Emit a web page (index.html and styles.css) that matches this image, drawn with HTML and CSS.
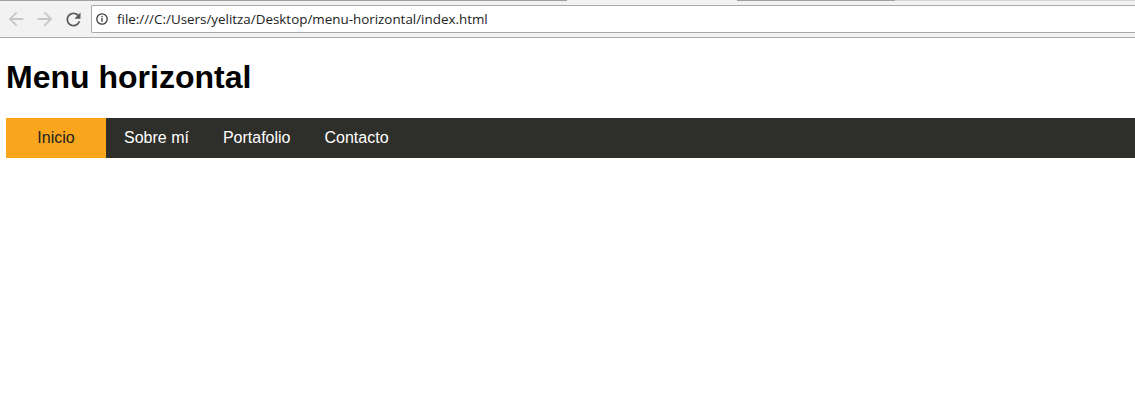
FILE: index.html
```html
<!DOCTYPE html>
<html lang="es">
<head>
<meta charset="utf-8">
<title>Menu horizontal</title>
<link rel="stylesheet" href="styles.css">
</head>
<body>
<div class="chrome">
  <div class="tabstrip">
    <span class="tab-edge e1"></span>
    <span class="tab-gap"></span>
    <span class="tab-edge e2"></span>
    <span class="tab-rest"></span>
  </div>
  <div class="toolbar">
    <div class="navbtns">
      <span class="btn back">
        <svg viewBox="0 0 24 24" width="22" height="22"><path d="M20 11H7.83l5.59-5.59L12 4l-8 8 8 8 1.41-1.41L7.83 13H20v-2z" fill="#c6c6c6"/></svg>
      </span>
      <span class="btn fwd">
        <svg viewBox="0 0 24 24" width="22" height="22"><path d="M4 11h12.17l-5.59-5.59L12 4l8 8-8 8-1.41-1.41L16.17 13H4v-2z" fill="#c6c6c6"/></svg>
      </span>
      <span class="btn reload">
        <svg viewBox="0 0 24 24" width="21" height="21"><path d="M17.65 6.35C16.2 4.9 14.21 4 12 4c-4.42 0-7.99 3.58-7.99 8s3.57 8 7.99 8c3.73 0 6.84-2.55 7.73-6h-2.08c-.82 2.33-3.04 4-5.65 4-3.31 0-6-2.69-6-6s2.69-6 6-6c1.66 0 3.14.69 4.22 1.78L13 11h7V4l-2.35 2.35z" fill="#5a5a5a"/></svg>
      </span>
    </div>
    <div class="omnibox">
      <svg class="info" viewBox="0 0 12 12" width="12" height="12"><circle cx="6" cy="6" r="5.2" fill="none" stroke="#3c3c3c" stroke-width="1.3"/><rect x="5.35" y="5" width="1.3" height="3.8" fill="#3c3c3c"/><rect x="5.35" y="2.9" width="1.3" height="1.3" fill="#3c3c3c"/></svg>
      <span class="url">file:///C:/Users/yelitza/Desktop/menu-horizontal/index.html</span>
    </div>
  </div>
</div>
<main class="page">
  <h1 class="title">Menu horizontal</h1>
  <nav class="menu">
    <a class="item active" href="#">Inicio</a>
    <a class="item" href="#">Sobre mí</a>
    <a class="item" href="#">Portafolio</a>
    <a class="item" href="#">Contacto</a>
  </nav>
</main>
</body>
</html>
```
FILE: styles.css
```css
* { box-sizing: border-box; }
html, body { margin: 0; padding: 0; background: #fff; }
body { width: 1135px; overflow: hidden; }

.chrome {
  height: 38px;
  background: #f2f2f2;
  border-bottom: 1px solid #aaaaaa;
}
.tabstrip {
  display: flex;
  height: 1px;
}
.tab-edge { background: #a0a0a0; height: 1px; }
.e1 { width: 567px; }
.tab-gap { width: 170px; }
.e2 { width: 158px; }
.tab-rest { flex: 1; background: #d6d6d6; }

.toolbar {
  display: flex;
  align-items: flex-start;
  padding-top: 4px;
  height: 32px;
}
.navbtns {
  display: flex;
  width: 91px;
  height: 28px;
  align-items: center;
}
.btn { display: flex; align-items: center; justify-content: center; }
.back { width: 30px; margin-left: 1px; }
.fwd { width: 28px; }
.reload { width: 28px; }

.omnibox {
  flex: 1;
  height: 28px;
  background: #fff;
  border: 1px solid #a9a9a9;
  border-right: none;
  border-radius: 2px 0 0 2px;
  display: flex;
  align-items: center;
  padding-left: 4px;
}
.info { margin-right: 9px; flex: none; }
.url {
  font-family: "Open Sans", "Liberation Sans", sans-serif;
  font-size: 13.4px;
  color: #222;
  white-space: nowrap;
}

.page {
  padding-left: 6px;
}
.title {
  margin: 21px 0 22px;
  font-family: "Liberation Sans", Arial, sans-serif;
  font-weight: bold;
  font-size: 32px;
  line-height: 37px;
  color: #000;
}
.menu {
  display: flex;
  height: 40px;
  background: #2e2e2a;
}
.item {
  display: block;
  font-family: "Liberation Sans", Arial, sans-serif;
  font-size: 16px;
  line-height: 40px;
  color: #fff;
  text-decoration: none;
  padding: 0 17px;
}
.item.active + .item { padding-left: 18px; }
.item.active {
  width: 100px;
  padding: 0;
  text-align: center;
  background: #f9a61c;
  color: #222;
}
```
